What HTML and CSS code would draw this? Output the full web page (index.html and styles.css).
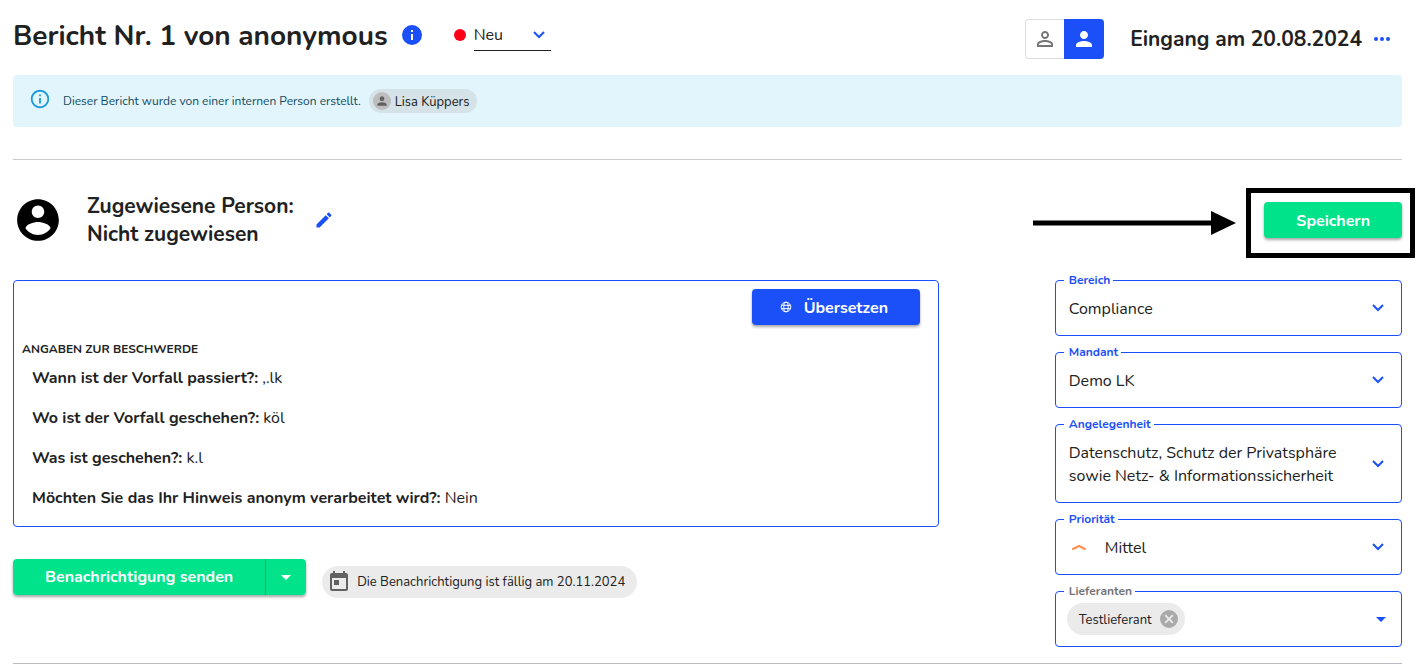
FILE: index.html
```html
<!DOCTYPE html>
<html lang="de">
<head>
<meta charset="utf-8">
<meta name="viewport" content="width=device-width, initial-scale=1">
<title>Bericht Nr. 1</title>
<link rel="stylesheet" href="styles.css">
</head>
<body>
<main class="page">
  <header class="header">
    <div class="header-left">
      <h1 class="title">Bericht Nr. 1 von anonymous</h1>
      <svg class="info-badge" viewBox="2 2 20 20" aria-hidden="true"><path d="M12 2a10 10 0 1 0 0 20 10 10 0 0 0 0-20zm1 15h-2v-6h2v6zm0-8h-2V7h2v2z"/></svg>
      <span class="status-dot"></span>
      <span class="status">
        <select class="status-select" aria-label="Status"><option>Neu</option></select>
        <svg class="chevron status-chevron" viewBox="0 0 12 8" aria-hidden="true"><path d="M1 1l5 5 5-5"/></svg>
      </span>
    </div>
    <div class="header-right">
      <div class="toggle">
        <button class="toggle-btn" type="button" aria-label="Anonym"><svg viewBox="0 0 24 24"><path d="M12 5.900a2.100 2.100 0 1 1 0 4.200 2.100 2.100 0 0 1 0-4.200m0 9c2.970 0 6.100 1.460 6.100 2.100v1.100H5.900V17c0-.64 3.130-2.100 6.100-2.100M12 4C9.790 4 8 5.790 8 8s1.790 4 4 4 4-1.790 4-4-1.790-4-4-4zm0 9c-2.670 0-8 1.340-8 4v3h16v-3c0-2.660-5.330-4-8-4z"/></svg></button>
        <button class="toggle-btn toggle-active" type="button" aria-label="Person" aria-pressed="true"><svg viewBox="0 0 24 24"><path d="M12 12c2.210 0 4-1.790 4-4s-1.790-4-4-4-4 1.790-4 4 1.790 4 4 4zm0 2c-2.670 0-8 1.340-8 4v2h16v-2c0-2.660-5.330-4-8-4z"/></svg></button>
      </div>
      <h2 class="received">Eingang am 20.08.2024</h2>
      <button class="more" type="button" aria-label="Mehr"><svg viewBox="4 10 16 4"><path d="M6 10a2 2 0 1 0 0 4 2 2 0 0 0 0-4zm12 0a2 2 0 1 0 0 4 2 2 0 0 0 0-4zm-6 0a2 2 0 1 0 0 4 2 2 0 0 0 0-4z"/></svg></button>
    </div>
  </header>

  <div class="alert" role="status">
    <svg class="alert-icon" viewBox="0 0 24 24" aria-hidden="true"><path d="M11 7h2v2h-2zm0 4h2v6h-2zm1-9C6.480 2 2 6.480 2 12s4.480 10 10 10 10-4.480 10-10S17.520 2 12 2zm0 18c-4.410 0-8-3.590-8-8s3.590-8 8-8 8 3.590 8 8-3.590 8-8 8z"/></svg>
    <span class="alert-text">Dieser Bericht wurde von einer internen Person erstellt.</span>
    <span class="chip person-chip">
      <span class="chip-avatar"><svg viewBox="0 0 24 24" aria-hidden="true"><path d="M12 12c2.210 0 4-1.790 4-4s-1.790-4-4-4-4 1.790-4 4 1.790 4 4 4zm0 2c-2.670 0-8 1.340-8 4v2h16v-2c0-2.660-5.330-4-8-4z"/></svg></span>
      <span class="chip-text">Lisa Küppers</span>
    </span>
  </div>

  <hr class="rule">

  <section class="assignee">
    <svg class="avatar" viewBox="0 0 24 24" aria-hidden="true"><path d="M12 2C6.480 2 2 6.480 2 12s4.480 10 10 10 10-4.480 10-10S17.520 2 12 2zm0 3c1.660 0 3 1.340 3 3s-1.340 3-3 3-3-1.340-3-3 1.340-3 3-3zm0 14.200c-2.500 0-4.710-1.280-6-3.220.03-1.990 4-3.080 6-3.080 1.990 0 5.970 1.090 6 3.080-1.290 1.940-3.500 3.220-6 3.220z"/></svg>
    <h2 class="assignee-text">Zugewiesene Person:<br>Nicht zugewiesen</h2>
    <button class="edit" type="button" aria-label="Bearbeiten"><svg viewBox="0 0 24 24"><path d="M3 17.250V21h3.750L17.810 9.940l-3.750-3.750L3 17.250zM20.710 7.040a1 1 0 0 0 0-1.410l-2.340-2.340a1 1 0 0 0-1.410 0l-1.830 1.830 3.750 3.750 1.830-1.830z"/></svg></button>
    <div class="save">
      <button class="btn btn-green" type="button">Speichern</button>
      <span class="save-frame"></span>
      <svg class="save-arrow" viewBox="0 0 203 26" aria-hidden="true"><path d="M0 10.500h178V1l25 12-25 12v-9.500H0z"/></svg>
    </div>
  </section>

  <div class="columns">
    <div class="main">
      <section class="report">
        <div class="report-tools">
          <button class="btn btn-blue" type="button"><svg class="globe" viewBox="0 0 12 12" aria-hidden="true"><circle cx="6" cy="6" r="4.800"/><ellipse cx="6" cy="6" rx="2.200" ry="4.800"/><path d="M1.500 4.300h9M1.500 7.700h9"/></svg>Übersetzen</button>
        </div>
        <h3 class="report-heading">ANGABEN ZUR BESCHWERDE</h3>
        <p class="qa"><b>Wann ist der Vorfall passiert?:</b> ,.lk</p>
        <p class="qa"><b>Wo ist der Vorfall geschehen?:</b> köl</p>
        <p class="qa"><b>Was ist geschehen?:</b> k.l</p>
        <p class="qa"><b>Möchten Sie das Ihr Hinweis anonym verarbeitet wird?:</b> Nein</p>
      </section>
      <div class="actions">
        <div class="split">
          <button class="btn btn-green split-main" type="button">Benachrichtigung senden</button>
          <button class="btn btn-green split-menu" type="button" aria-label="Weitere Optionen"><svg class="caret" viewBox="0 0 10 5"><path d="M0 0l5 5 5-5z"/></svg></button>
        </div>
        <span class="chip due-chip">
          <svg class="calendar" viewBox="0 0 24 24" aria-hidden="true"><path d="M19 3h-1V1h-2v2H8V1H6v2H5c-1.110 0-2 .9-2 2v14a2 2 0 0 0 2 2h14c1.100 0 2-.9 2-2V5c0-1.100-.9-2-2-2zm0 16H5V8h14v11zM7 10h5v5H7z"/></svg>
          Die Benachrichtigung ist fällig am 20.11.2024
        </span>
      </div>
    </div>

    <aside class="side">
      <div class="field">
        <label class="field-label" for="bereich">Bereich</label>
        <select class="field-select" id="bereich"><option>Compliance</option></select>
        <svg class="chevron field-chevron" viewBox="0 0 12 8" aria-hidden="true"><path d="M1 1l5 5 5-5"/></svg>
      </div>
      <div class="field">
        <label class="field-label" for="mandant">Mandant</label>
        <select class="field-select" id="mandant"><option>Demo LK</option></select>
        <svg class="chevron field-chevron" viewBox="0 0 12 8" aria-hidden="true"><path d="M1 1l5 5 5-5"/></svg>
      </div>
      <div class="field">
        <label class="field-label" for="angelegenheit">Angelegenheit</label>
        <select class="field-select" id="angelegenheit"><option>Datenschutz, Schutz der Privatsphäre sowie Netz- &amp; Informationssicherheit</option></select>
        <svg class="chevron field-chevron" viewBox="0 0 12 8" aria-hidden="true"><path d="M1 1l5 5 5-5"/></svg>
      </div>
      <div class="field">
        <label class="field-label" for="prioritaet">Priorität</label>
        <svg class="priority-icon" viewBox="0 0 16 8" aria-hidden="true"><path d="M2 6l6-3L14 6"/></svg>
        <select class="field-select with-icon" id="prioritaet"><option>Mittel</option></select>
        <svg class="chevron field-chevron" viewBox="0 0 12 8" aria-hidden="true"><path d="M1 1l5 5 5-5"/></svg>
      </div>
      <div class="field tags">
        <label class="field-label muted" for="lieferanten">Lieferanten</label>
        <span class="chip tag"><span class="chip-text">Testlieferant</span>
          <button class="tag-remove" type="button" aria-label="Entfernen"><svg viewBox="2 2 20 20"><path d="M12 2a10 10 0 1 0 0 20 10 10 0 0 0 0-20zm5 13.590L15.590 17 12 13.410 8.410 17 7 15.590 10.590 12 7 8.410 8.410 7 12 10.590 15.590 7 17 8.410 13.410 12 17 15.590z"/></svg></button>
        </span>
        <input class="tag-input" id="lieferanten" type="text">
        <button class="tag-open" type="button" aria-label="Öffnen"><svg class="caret" viewBox="0 0 10 5"><path d="M0 0l5 5 5-5z"/></svg></button>
      </div>
    </aside>
  </div>
  <hr class="rule rule-end">
</main>
</body>
</html>
```
FILE: styles.css
```css
* { box-sizing: border-box; }
:root {
  --blue: #1b50f8;
  --green: #00e38b;
  --ink: #212121;
}
body {
  margin: 0;
  background: #fff;
  color: var(--ink);
  font-family: Nunito, Lato, "Noto Sans", sans-serif;
  font-size: 16px;
  line-height: 24px;
}
button, select, input { font: inherit; color: inherit; }
button { border: 0; background: none; padding: 0; cursor: pointer; }
svg { display: block; flex: none; fill: currentColor; }
h1, h2, h3, p { margin: 0; }

.page { padding: 16px 24px 0 13px; }

.header { display: flex; justify-content: space-between; align-items: flex-start; }
.header-left { display: flex; align-items: center; height: 38px; }
.title { padding-top: 2px; font-size: 28px; line-height: 38px; font-weight: 700; }
.info-badge { width: 20px; height: 20px; margin-left: 14px; color: var(--blue); }
.status-dot { width: 12px; height: 12px; margin: 0 8px 0 32px; border-radius: 50%; background: #ff0019; }
.status { position: relative; width: 77px; }
.status-select {
  display: block;
  width: 100%;
  height: 32px;
  padding: 0 24px 0 0;
  border: 0;
  border-bottom: 1px solid var(--ink);
  background: none;
  appearance: none;
}
.chevron { width: 12px; height: 8px; fill: none; stroke: var(--blue); stroke-width: 2; pointer-events: none; }
.status-chevron { position: absolute; right: 6px; top: 12px; }

.header-right { display: flex; align-items: center; padding-top: 3px; }
.toggle { display: flex; height: 40px; border: 1px solid #dedede; border-right: 0; border-radius: 4px; }
.toggle-btn { width: 38px; display: grid; place-items: center; color: #757575; }
.toggle-btn svg { width: 24px; height: 24px; }
.toggle-btn.toggle-active { width: 40px; margin: -1px 0; border-radius: 0 4px 4px 0; background: var(--blue); color: #fff; }
.received { margin-left: 26px; font-size: 21px; line-height: 28px; font-weight: 700; }
.more { width: 40px; display: grid; place-items: center; color: var(--blue); }
.more svg { width: 16px; height: 4px; }

.alert {
  display: flex;
  align-items: center;
  height: 52px;
  margin-top: 16px;
  padding: 0 16px;
  border-radius: 4px;
  background: #e2f5fd;
  color: #0e4a60;
  font-size: 12px;
}
.alert-icon { width: 22px; height: 22px; margin: 0 12px 4px 0; color: #1d9bd9; }
.chip { display: inline-flex; align-items: center; background: #ebebeb; color: var(--ink); font-size: 13px; white-space: nowrap; }
.chip-text { padding-top: 2px; }
.person-chip { height: 24px; margin-left: 8px; padding: 0 8px 0 4px; gap: 4px; border-radius: 12px; background: #d5e3e8; }
.chip-avatar { display: grid; place-items: center; width: 18px; height: 18px; border-radius: 50%; background: #bdbdbd; color: #616161; }
.chip-avatar svg { width: 14px; height: 14px; }

.rule { height: 1px; margin: 32px 0; border: 0; background: #c8ccd0; }

.assignee { display: flex; align-items: center; }
.avatar { width: 50px; height: 50px; color: #000; }
.assignee-text { margin-left: 24px; font-size: 21px; line-height: 28px; font-weight: 700; }
.edit { margin-left: 20px; color: var(--blue); }
.edit svg { width: 20px; height: 20px; }
.save { position: relative; margin-left: auto; }
.save-frame { position: absolute; inset: -14px -13px -20px -18px; border: 5px solid #000; pointer-events: none; }
.save-arrow { position: absolute; right: 166px; top: 8px; width: 203px; height: 26px; color: #000; }

.btn {
  display: inline-flex;
  align-items: center;
  justify-content: center;
  height: 36px;
  padding: 2px 32px 0;
  border-radius: 4px;
  color: #fff;
  font-weight: 700;
  white-space: nowrap;
  box-shadow: 0 2px 3px rgba(0, 0, 0, .35);
}
.btn-green { background: var(--green); }
.btn-blue { padding-left: 28px; background: var(--blue); }

.columns { display: grid; grid-template-columns: minmax(0, 8fr) minmax(0, 1fr) minmax(0, 3fr); margin-top: 32px; }
.report { padding: 8px 18px 16px 8px; border: 1px solid var(--blue); border-radius: 4px; }
.report-tools { display: flex; justify-content: flex-end; }
.globe { width: 12px; height: 12px; margin: 0 12px 2px 0; fill: none; stroke: #fff; }
.report-heading { margin-top: 12px; font-size: 12px; line-height: 24px; font-weight: 700; }
.qa { margin: 0 10px 16px; }
.report-heading + .qa { margin-top: 5px; }
.qa:last-child { margin-bottom: 0; }

.actions { display: flex; align-items: flex-start; gap: 16px; margin-top: 32px; }
.split { display: flex; border-radius: 4px; box-shadow: 0 2px 3px rgba(0, 0, 0, .35); }
.split .btn { padding-top: 0; box-shadow: none; }
.split-main { border-right: 1px solid #04a868; border-radius: 4px 0 0 4px; }
.split .split-menu { width: 40px; padding: 0; border-radius: 0 4px 4px 0; }
.caret { width: 10px; height: 5px; }
.due-chip { height: 32px; margin-top: 7px; padding: 0 12px 0 5px; gap: 6px; border-radius: 16px; }
.calendar { width: 24px; height: 24px; color: #616161; }

.side { grid-column: 3; display: grid; grid-template-columns: minmax(0, 1fr); gap: 16px; align-content: start; }
.field { position: relative; border: 1px solid var(--blue); border-radius: 4px; }
.field-label {
  position: absolute;
  left: 8px;
  top: -9px;
  padding: 0 3px 0 5px;
  background: #fff;
  color: var(--blue);
  font-size: 12px;
  line-height: 16px;
  font-weight: 700;
}
.field-label.muted { color: #757575; }
.field-select {
  display: block;
  width: 100%;
  min-height: 54px;
  padding: 17px 48px 14px 13px;
  border: 0;
  background: none;
  line-height: 23px;
  white-space: normal;
  appearance: none;
}
.field-select.with-icon { padding-left: 49px; }
.field-chevron { position: absolute; right: 17px; top: calc(50% - 4px); }
.priority-icon { position: absolute; left: 15px; top: calc(50% - 4px); width: 16px; height: 8px; fill: none; stroke: #ff8f4d; stroke-width: 2; stroke-linecap: round; stroke-linejoin: round; }
.tags { display: flex; align-items: center; height: 56px; padding: 0 11px; }
.tag { height: 32px; padding: 0 7px 0 12px; gap: 8px; border-radius: 16px; }
.tag-remove { color: #aaa; }
.tag-remove svg { width: 18px; height: 18px; }
.tag-input { flex: 1; min-width: 0; border: 0; outline: 0; background: none; }
.tag-open { display: grid; place-items: center; width: 18px; height: 24px; color: var(--blue); }
.rule-end { margin: 16px 0 0; background: #b9bcc6; }
```
